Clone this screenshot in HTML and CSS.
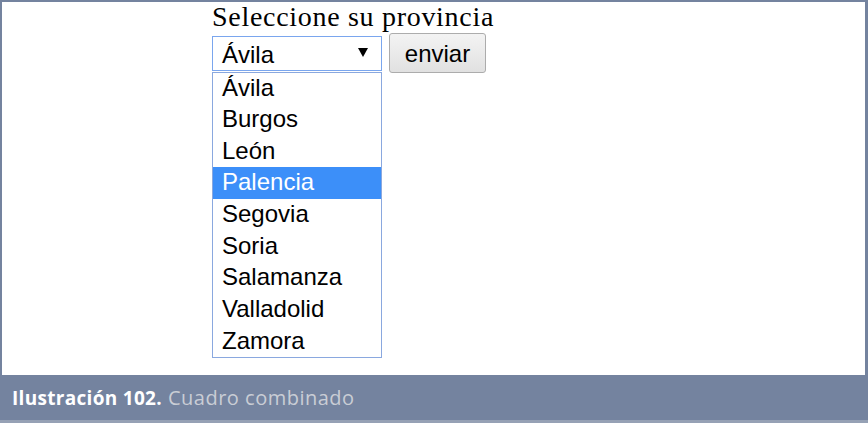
FILE: index.html
```html
<!DOCTYPE html>
<html lang="es">
<head>
<meta charset="utf-8">
<title>Cuadro combinado</title>
<link rel="stylesheet" href="styles.css">
</head>
<body>
<div class="frame">
  <div class="canvas">
    <div class="title">Seleccione su provincia</div>
    <div class="form-row">
      <div class="combo">
        <div class="select">
          <span class="select-value">Ávila</span>
          <span class="arrow"></span>
        </div>
        <ul class="options">
          <li class="option">Ávila</li>
          <li class="option">Burgos</li>
          <li class="option">León</li>
          <li class="option selected">Palencia</li>
          <li class="option">Segovia</li>
          <li class="option">Soria</li>
          <li class="option">Salamanza</li>
          <li class="option">Valladolid</li>
          <li class="option">Zamora</li>
        </ul>
      </div>
      <button class="button" type="button">enviar</button>
    </div>
  </div>
  <div class="caption"><span class="caption-label">Ilustración 102.</span><span class="caption-text">Cuadro combinado</span></div>
  <div class="bottom-line"></div>
</div>
</body>
</html>
```
FILE: styles.css
```css
html, body {
  margin: 0;
  padding: 0;
  background: #ffffff;
}

.frame {
  width: 868px;
  height: 423px;
  box-sizing: border-box;
  padding: 2px 3px 0 2px;
  background: #74839f;
  display: flex;
  flex-direction: column;
}

.canvas {
  height: 373px;
  flex: none;
  background: #ffffff;
  padding-left: 210px;
  box-sizing: border-box;
}

.title {
  font-family: "Liberation Serif", "Times New Roman", serif;
  font-size: 28px;
  letter-spacing: 0.7px;
  line-height: 30px;
  padding-top: 0;
  height: 31px;
  color: #000;
}

.form-row {
  display: flex;
  align-items: center;
  gap: 7px;
  height: 40px;
}

.combo {
  position: relative;
  width: 170px;
}

.select {
  height: 35px;
  box-sizing: border-box;
  border: 1px solid #7aa6ee;
  display: flex;
  align-items: center;
  justify-content: space-between;
  padding: 3px 13px 0 9px;
  font-family: "Liberation Sans", Arial, sans-serif;
  font-size: 24px;
  color: #000;
}

.arrow {
  width: 0;
  height: 0;
  border-left: 5px solid transparent;
  border-right: 5px solid transparent;
  border-top: 9px solid #000;
  margin-top: -4px;
}

.options {
  position: absolute;
  top: 36px;
  left: 0;
  width: 170px;
  box-sizing: border-box;
  margin: 0;
  padding: 0;
  list-style: none;
  border: 1px solid #8aa8df;
  background: #fff;
}

.option {
  height: 31.67px;
  box-sizing: border-box;
  padding: 0 0 2px 9px;
  line-height: 29.67px;
  font-family: "Liberation Sans", Arial, sans-serif;
  font-size: 24px;
  color: #000;
}

.option.selected {
  background: #3c8ff9;
  color: #fff;
}

.button {
  width: 97px;
  height: 40px;
  box-sizing: border-box;
  border: 1px solid #acacac;
  border-radius: 3px;
  background: linear-gradient(#f3f3f3, #e1e1e1);
  font-family: "Liberation Sans", Arial, sans-serif;
  font-size: 24px;
  color: #000;
  padding: 1px 0 0 0;
  margin: 0;
}

.caption {
  height: 45px;
  flex: none;
  display: flex;
  align-items: center;
  padding-left: 10px;
  font-family: "Open Sans", sans-serif;
  font-size: 19px;
  gap: 6px;
}

.caption-label {
  color: #ffffff;
  font-weight: 700;
  letter-spacing: 0.3px;
}

.caption-text {
  color: #c9cdd5;
  font-size: 20px;
  letter-spacing: 0.5px;
}

.bottom-line {
  height: 3px;
  flex: none;
  margin: 0 -3px 0 -2px;
  background: #96a1b5;
}
```
